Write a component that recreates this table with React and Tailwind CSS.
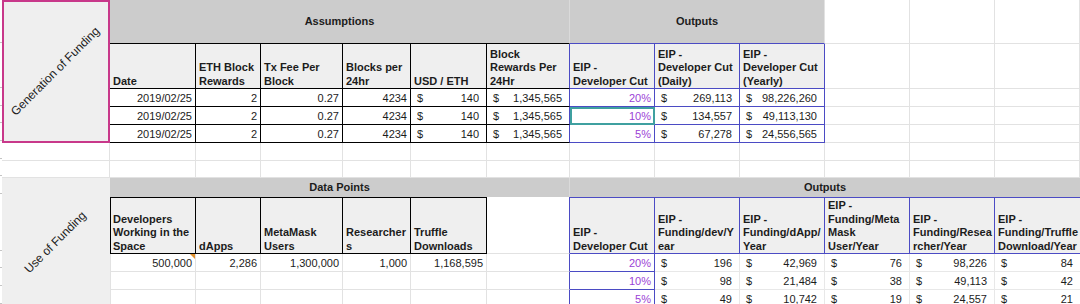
import React from 'react';

const ROWS = [44, 45, 18, 18, 18, 18, 17, 19, 57, 18, 18, 18];

function C({ className = '', children }) {
  return <div className={'min-w-0 min-h-0 overflow-hidden box-border ' + className}>{children}</div>;
}

const gl = 'border-r border-b border-[#e2e2e2]';
const blackHdr = 'bg-[#efefef] border-r border-b border-black flex items-end px-[3px] font-bold';
const purpHdr = 'bg-[#efefef] border-r border-b border-[#4b4bc4] flex items-end px-[3px] font-bold';
const blackNum = 'border-r border-b border-black flex items-end justify-end px-[3px] pb-[1px]';
const moneyCls = 'flex items-end justify-between pl-[6px] pr-[7px] pb-[1px]';

function Money({ v, className }) {
  return (
    <C className={moneyCls + ' ' + className}>
      <span>$</span>
      <span>{v}</span>
    </C>
  );
}

const top = [
  ['20%', '269,113', '98,226,260'],
  ['10%', '134,557', '49,113,130'],
  ['5%', '67,278', '24,556,565'],
];

const low = [
  ['20%', '196', '42,969', '76', '98,226', '84'],
  ['10%', '98', '21,484', '38', '49,113', '42'],
  ['5%', '49', '10,742', '19', '24,557', '21'],
];

export default function App() {
  return (
    <div className="w-[1080px] h-[304px] overflow-hidden bg-white flex font-['Liberation_Sans',Arial,sans-serif] text-[11px] leading-[13.4px] text-[#1c1c1c]">
      <div className="w-[2px] shrink-0 flex flex-col">
        {ROWS.map((h, i) => (
          <div key={i} className="border-b border-[#c4c4c4] box-border" style={{ height: h }} />
        ))}
      </div>
      <div className="grid shrink-0 grid-cols-[108px_86px_65px_82px_68px_76px_83px_85px_85px_85px_85px_85px_85px] grid-rows-[44px_45px_18px_18px_18px_18px_17px_19px_57px_18px_18px_18px]">
        {/* Row 1 */}
        <C className="row-span-5 border-2 border-[#c8388a] bg-[#efefef] flex items-center justify-center">
          <span className="shrink-0 -rotate-45 whitespace-nowrap text-[12px]">Generation of Funding</span>
        </C>
        <C className="col-span-6 bg-[#cccccc] border-r border-b border-r-[#dadada] border-b-black flex items-center justify-center font-bold">
          Assumptions
        </C>
        <C className="col-span-3 bg-[#cccccc] border-r border-b border-r-[#e2e2e2] border-b-[#4b4bc4] flex items-center justify-center font-bold">
          Outputs
        </C>
        <C className={gl} />
        <C className={gl} />
        <C className={gl} />

        {/* Row 2 headers */}
        <C className={blackHdr}>Date</C>
        <C className={blackHdr}>
          <span>ETH Block<br />Rewards</span>
        </C>
        <C className={blackHdr}>
          <span>Tx Fee Per<br />Block</span>
        </C>
        <C className={blackHdr}>
          <span>Blocks per<br />24hr</span>
        </C>
        <C className={blackHdr}>USD / ETH</C>
        <C className="bg-[#efefef] border-r border-b border-r-[#4b4bc4] border-b-black flex items-end px-[3px] font-bold">
          <span>Block<br />Rewards Per<br />24Hr</span>
        </C>
        <C className={purpHdr}>
          <span>EIP -<br />Developer Cut</span>
        </C>
        <C className={purpHdr}>
          <span>EIP -<br />Developer Cut<br />(Daily)</span>
        </C>
        <C className={purpHdr}>
          <span>EIP -<br />Developer Cut<br />(Yearly)</span>
        </C>
        <C className={gl} />
        <C className={gl} />
        <C className={gl} />

        {/* Rows 3-5 */}
        {top.map((r, i) => (
          <React.Fragment key={i}>
            <C className={blackNum}>2019/02/25</C>
            <C className={blackNum}>2</C>
            <C className={blackNum}>0.27</C>
            <C className={blackNum}>4234</C>
            <Money v="140" className="border-r border-b border-black" />
            <Money v="1,345,565" className="border-r border-b border-r-[#4b4bc4] border-b-black" />
            <C
              className={
                i === 1
                  ? 'border-r border-b border-[#4b4bc4] flex items-end justify-end px-[3px] pb-[1px] text-[#9b3fd6] outline-2 outline-offset-[-2px] outline-[#3fa0a0]'
                  : 'border-r border-b border-[#4b4bc4] flex items-end justify-end px-[3px] pb-[1px] text-[#9b3fd6]'
              }
            >
              {r[0]}
            </C>
            <Money v={r[1]} className="border-r border-b border-[#4b4bc4]" />
            <Money v={r[2]} className="border-r border-b border-[#4b4bc4]" />
            <C className={gl} />
            <C className={gl} />
            <C className={gl} />
          </React.Fragment>
        ))}

        {/* Rows 6-7 */}
        {Array.from({ length: 26 }).map((_, i) => (
          <C key={'e' + i} className={gl} />
        ))}

        {/* Row 8 */}
        <C className="row-span-5 bg-[#efefef] border-b border-[#e2e2e2] flex items-center justify-center">
          <span className="shrink-0 -rotate-45 whitespace-nowrap text-[12px]">Use of Funding</span>
        </C>
        <C className="col-span-6 bg-[#cccccc] border-r border-r-[#dadada] flex items-center justify-center font-bold">
          Data Points
        </C>
        <C className="col-span-6 bg-[#cccccc] flex items-center justify-center font-bold">Outputs</C>

        {/* Row 9 headers */}
        <C className="bg-[#efefef] border border-black flex items-end px-[2px] font-bold">
          <span>Developers<br />Working in the<br />Space</span>
        </C>
        <C className="bg-[#efefef] border-t border-r border-b border-black flex items-end px-[3px] font-bold">dApps</C>
        <C className="bg-[#efefef] border-t border-r border-b border-black flex items-end px-[3px] font-bold">
          <span>MetaMask<br />Users</span>
        </C>
        <C className="bg-[#efefef] border-t border-r border-b border-black flex items-end px-[3px] font-bold">
          <span>Researcher<br />s</span>
        </C>
        <C className="bg-[#efefef] border-t border-r border-b border-black flex items-end px-[3px] font-bold">
          <span>Truffle<br />Downloads</span>
        </C>
        <C className="border-r border-b border-r-[#4b4bc4] border-b-[#e2e2e2]" />
        <C className="bg-[#efefef] border-t border-r border-b border-[#4b4bc4] flex items-end px-[3px] font-bold">
          <span>EIP -<br />Developer Cut</span>
        </C>
        <C className="bg-[#efefef] border-t border-r border-b border-[#4b4bc4] flex items-end px-[3px] font-bold">
          <span>EIP -<br />Funding/dev/Y<br />ear</span>
        </C>
        <C className="bg-[#efefef] border-t border-r border-b border-[#4b4bc4] flex items-end px-[3px] font-bold">
          <span>EIP -<br />Funding/dApp/<br />Year</span>
        </C>
        <C className="bg-[#efefef] border-t border-r border-b border-[#4b4bc4] flex items-end px-[3px] font-bold">
          <span>EIP -<br />Funding/Meta<br />Mask<br />User/Year</span>
        </C>
        <C className="bg-[#efefef] border-t border-r border-b border-[#4b4bc4] flex items-end px-[3px] font-bold">
          <span>EIP -<br />Funding/Resea<br />rcher/Year</span>
        </C>
        <C className="bg-[#efefef] border-t border-b border-[#4b4bc4] flex items-end px-[3px] font-bold whitespace-nowrap">
          <span>EIP -<br />Funding/Truffle<br />Download/Year</span>
        </C>

        {/* Rows 10-12 */}
        {low.map((r, i) => (
          <React.Fragment key={'l' + i}>
            <C className="relative border-l border-r border-b border-[#e2e2e2] flex items-end justify-end px-[3px] pb-[1px]">
              {i === 0 ? '500,000' : ''}
              {i === 0 && (
                <span className="absolute top-0 right-0 w-0 h-0 border-l-[5px] border-l-transparent border-t-[5px] border-t-[#e0902c]" />
              )}
            </C>
            <C className={gl + ' flex items-end justify-end px-[3px] pb-[1px]'}>{i === 0 ? '2,286' : ''}</C>
            <C className={gl + ' flex items-end justify-end px-[3px] pb-[1px]'}>{i === 0 ? '1,300,000' : ''}</C>
            <C className={gl + ' flex items-end justify-end px-[3px] pb-[1px]'}>{i === 0 ? '1,000' : ''}</C>
            <C className={gl + ' flex items-end justify-end px-[3px] pb-[1px]'}>{i === 0 ? '1,168,595' : ''}</C>
            <C className="border-r border-b border-r-[#4b4bc4] border-b-[#e2e2e2]" />
            <C className="border-r border-b border-[#4b4bc4] flex items-end justify-end px-[3px] pb-[1px] text-[#9b3fd6]">
              {r[0]}
            </C>
            <Money v={r[1]} className="border-r border-b border-[#e8e8e8]" />
            <Money v={r[2]} className="border-r border-b border-[#e8e8e8]" />
            <Money v={r[3]} className="border-r border-b border-[#e8e8e8]" />
            <Money v={r[4]} className="border-r border-b border-[#e8e8e8]" />
            <Money v={r[5]} className="border-b border-[#e8e8e8]" />
          </React.Fragment>
        ))}
      </div>
    </div>
  );
}
